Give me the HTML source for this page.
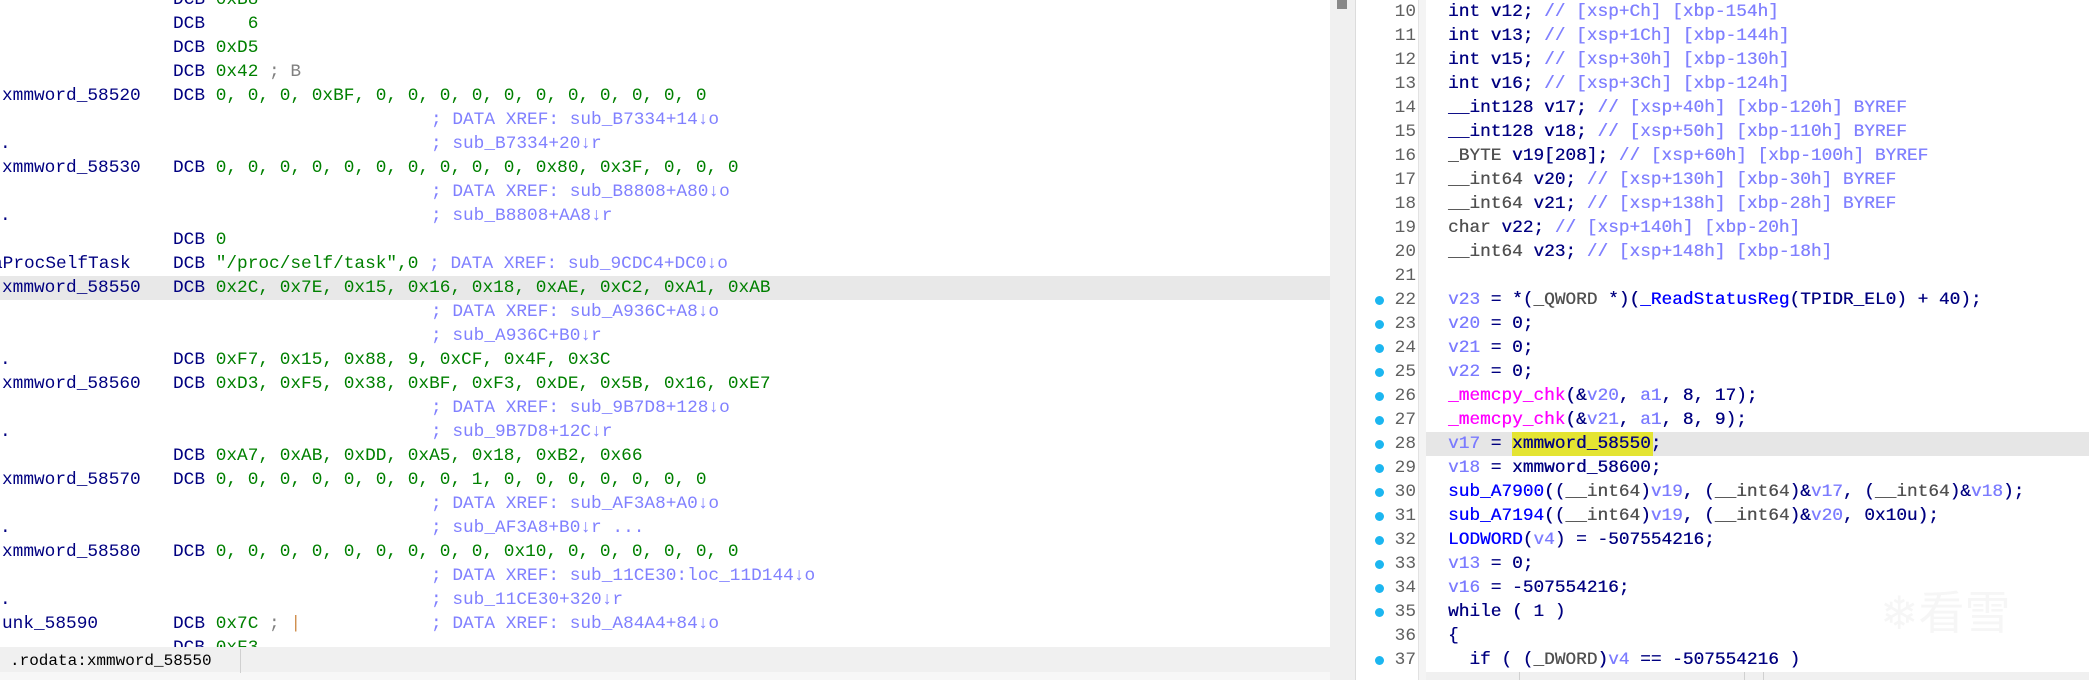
<!DOCTYPE html>
<html><head><meta charset="utf-8">
<style>
*{margin:0;padding:0;box-sizing:border-box}
body{width:2089px;height:680px;overflow:hidden;background:#fff;position:relative;font-family:"Liberation Mono","DejaVu Sans Mono",monospace;font-size:17.8px;}
.r{position:absolute;height:24px;line-height:24px;white-space:pre;}
.n{color:#000080}.g{color:#008000}.c{color:#8080ff}.gr{color:#808080}
.b{color:#0000ff}.m{color:#ff00ff}.v{color:#7b7bff}.d{color:#505050}.k{color:#000080}
.k{text-shadow:0.3px 0 0 currentColor}
.dot{position:absolute;left:1375px;width:9px;height:9px;border-radius:50%;background:#1cb6f0}
.ln{position:absolute;left:1380px;width:36px;text-align:right;color:#606060;height:24px;line-height:24px}
</style></head><body>
<div style="position:absolute;left:0;top:276px;width:1330px;height:24px;background:#e8e8e8"></div>
<div id="L">
<div class="r n" style="left:173px;top:-12px">DCB <span class="g">0xB8</span></div>
<div class="r n" style="left:173px;top:12px">DCB <span class="g">   6</span></div>
<div class="r n" style="left:173px;top:36px">DCB <span class="g">0xD5</span></div>
<div class="r n" style="left:173px;top:60px">DCB <span class="g">0x42</span> <span class="gr">; B</span></div>
<div class="r n" style="left:2px;top:84px">xmmword_58520</div>
<div class="r n" style="left:173px;top:84px">DCB <span class="g">0, 0, 0, 0xBF, 0, 0, 0, 0, 0, 0, 0, 0, 0, 0, 0</span></div>
<div class="r c" style="left:431px;top:108px">; DATA XREF: sub_B7334+14↓o</div>
<div class="r n" style="left:0;top:132px">.</div>
<div class="r c" style="left:431px;top:132px">; sub_B7334+20↓r</div>
<div class="r n" style="left:2px;top:156px">xmmword_58530</div>
<div class="r n" style="left:173px;top:156px">DCB <span class="g">0, 0, 0, 0, 0, 0, 0, 0, 0, 0, 0x80, 0x3F, 0, 0, 0</span></div>
<div class="r c" style="left:431px;top:180px">; DATA XREF: sub_B8808+A80↓o</div>
<div class="r n" style="left:0;top:204px">.</div>
<div class="r c" style="left:431px;top:204px">; sub_B8808+AA8↓r</div>
<div class="r n" style="left:173px;top:228px">DCB <span class="g">0</span></div>
<div class="r n" style="left:-8px;top:252px">aProcSelfTask</div>
<div class="r n" style="left:173px;top:252px">DCB <span class="g">"/proc/self/task",0</span> <span class="c">; DATA XREF: sub_9CDC4+DC0↓o</span></div>
<div class="r n" style="left:2px;top:276px">xmmword_58550</div>
<div class="r n" style="left:173px;top:276px">DCB <span class="g">0x2C, 0x7E, 0x15, 0x16, 0x18, 0xAE, 0xC2, 0xA1, 0xAB</span></div>
<div class="r c" style="left:431px;top:300px">; DATA XREF: sub_A936C+A8↓o</div>
<div class="r c" style="left:431px;top:324px">; sub_A936C+B0↓r</div>
<div class="r n" style="left:0;top:348px">.</div>
<div class="r n" style="left:173px;top:348px">DCB <span class="g">0xF7, 0x15, 0x88, 9, 0xCF, 0x4F, 0x3C</span></div>
<div class="r n" style="left:2px;top:372px">xmmword_58560</div>
<div class="r n" style="left:173px;top:372px">DCB <span class="g">0xD3, 0xF5, 0x38, 0xBF, 0xF3, 0xDE, 0x5B, 0x16, 0xE7</span></div>
<div class="r c" style="left:431px;top:396px">; DATA XREF: sub_9B7D8+128↓o</div>
<div class="r n" style="left:0;top:420px">.</div>
<div class="r c" style="left:431px;top:420px">; sub_9B7D8+12C↓r</div>
<div class="r n" style="left:173px;top:444px">DCB <span class="g">0xA7, 0xAB, 0xDD, 0xA5, 0x18, 0xB2, 0x66</span></div>
<div class="r n" style="left:2px;top:468px">xmmword_58570</div>
<div class="r n" style="left:173px;top:468px">DCB <span class="g">0, 0, 0, 0, 0, 0, 0, 0, 1, 0, 0, 0, 0, 0, 0, 0</span></div>
<div class="r c" style="left:431px;top:492px">; DATA XREF: sub_AF3A8+A0↓o</div>
<div class="r n" style="left:0;top:516px">.</div>
<div class="r c" style="left:431px;top:516px">; sub_AF3A8+B0↓r ...</div>
<div class="r n" style="left:2px;top:540px">xmmword_58580</div>
<div class="r n" style="left:173px;top:540px">DCB <span class="g">0, 0, 0, 0, 0, 0, 0, 0, 0, 0x10, 0, 0, 0, 0, 0, 0</span></div>
<div class="r c" style="left:431px;top:564px">; DATA XREF: sub_11CE30:loc_11D144↓o</div>
<div class="r n" style="left:0;top:588px">.</div>
<div class="r c" style="left:431px;top:588px">; sub_11CE30+320↓r</div>
<div class="r n" style="left:2px;top:612px">unk_58590</div>
<div class="r n" style="left:173px;top:612px">DCB <span class="g">0x7C</span> <span class="gr">; </span><span style="color:#d09050">|</span></div>
<div class="r c" style="left:431px;top:612px">; DATA XREF: sub_A84A4+84↓o</div>
<div class="r n" style="left:173px;top:636px">DCB <span class="g">0xF3</span></div>
</div>
<div style="position:absolute;left:0;top:647px;width:1330px;height:33px;background:#f0f0f0"></div>
<div style="position:absolute;left:0;top:672px;width:1330px;height:8px;background:#f7f7f7"></div>
<div class="r" style="left:10px;top:649px;color:#000;font-size:16px">.rodata:xmmword_58550</div>
<div style="position:absolute;left:240px;top:649px;width:1px;height:24px;background:#d0d0d0"></div>
<div style="position:absolute;left:1330px;top:0;width:25px;height:680px;background:#f0f0f0"></div>
<div style="position:absolute;left:1337px;top:0;width:10px;height:9px;background:#888"></div>
<div style="position:absolute;left:1355px;top:0;width:1px;height:680px;background:#dcdcdc"></div>
<div style="position:absolute;left:1418px;top:0;width:8px;height:680px;background:#f4f4f4;border-left:1px solid #e2e2e2"></div>
<div style="position:absolute;left:1426px;top:432px;width:663px;height:24px;background:#e6e6e6"></div>
<div style="position:absolute;left:1512px;top:432px;width:141px;height:24px;background:#e4e432"></div>
<div style="position:absolute;left:1426px;top:672px;width:663px;height:8px;background:#f0f0f0"></div>
<div style="position:absolute;left:1519px;top:672px;width:1px;height:8px;background:#d0d0d0"></div>
<div style="position:absolute;left:1744px;top:672px;width:1px;height:8px;background:#d0d0d0"></div>
<div style="position:absolute;left:1763px;top:672px;width:1px;height:8px;background:#d0d0d0"></div>
<div style="position:absolute;left:1880px;top:580px;font-family:'Noto Sans CJK SC',sans-serif;font-size:46px;color:#f6f6f6;line-height:60px">❄看雪</div>
<div class="ln" style="top:0">10</div><div class="ln" style="top:24px">11</div><div class="ln" style="top:48px">12</div><div class="ln" style="top:72px">13</div><div class="ln" style="top:96px">14</div><div class="ln" style="top:120px">15</div><div class="ln" style="top:144px">16</div><div class="ln" style="top:168px">17</div><div class="ln" style="top:192px">18</div><div class="ln" style="top:216px">19</div><div class="ln" style="top:240px">20</div><div class="ln" style="top:264px">21</div><div class="ln" style="top:288px">22</div><div class="ln" style="top:312px">23</div><div class="ln" style="top:336px">24</div><div class="ln" style="top:360px">25</div><div class="ln" style="top:384px">26</div><div class="ln" style="top:408px">27</div><div class="ln" style="top:432px">28</div><div class="ln" style="top:456px">29</div><div class="ln" style="top:480px">30</div><div class="ln" style="top:504px">31</div><div class="ln" style="top:528px">32</div><div class="ln" style="top:552px">33</div><div class="ln" style="top:576px">34</div><div class="ln" style="top:600px">35</div><div class="ln" style="top:624px">36</div><div class="ln" style="top:648px">37</div>
<div class="dot" style="top:296px"></div><div class="dot" style="top:320px"></div><div class="dot" style="top:344px"></div><div class="dot" style="top:368px"></div><div class="dot" style="top:392px"></div><div class="dot" style="top:416px"></div><div class="dot" style="top:440px"></div><div class="dot" style="top:464px"></div><div class="dot" style="top:488px"></div><div class="dot" style="top:512px"></div><div class="dot" style="top:536px"></div><div class="dot" style="top:560px"></div><div class="dot" style="top:584px"></div><div class="dot" style="top:608px"></div><div class="dot" style="top:656px"></div>
<div class="r k" style="left:1448px;top:0">int v12; <span class="c">// [xsp+Ch] [xbp-154h]</span></div>
<div class="r k" style="left:1448px;top:24px">int v13; <span class="c">// [xsp+1Ch] [xbp-144h]</span></div>
<div class="r k" style="left:1448px;top:48px">int v15; <span class="c">// [xsp+30h] [xbp-130h]</span></div>
<div class="r k" style="left:1448px;top:72px">int v16; <span class="c">// [xsp+3Ch] [xbp-124h]</span></div>
<div class="r k" style="left:1448px;top:96px">__int128 v17; <span class="c">// [xsp+40h] [xbp-120h] BYREF</span></div>
<div class="r k" style="left:1448px;top:120px">__int128 v18; <span class="c">// [xsp+50h] [xbp-110h] BYREF</span></div>
<div class="r k" style="left:1448px;top:144px"><span class="d">_BYTE</span> v19[208]; <span class="c">// [xsp+60h] [xbp-100h] BYREF</span></div>
<div class="r k" style="left:1448px;top:168px"><span class="d">__int64</span> v20; <span class="c">// [xsp+130h] [xbp-30h] BYREF</span></div>
<div class="r k" style="left:1448px;top:192px"><span class="d">__int64</span> v21; <span class="c">// [xsp+138h] [xbp-28h] BYREF</span></div>
<div class="r k" style="left:1448px;top:216px"><span class="d">char</span> v22; <span class="c">// [xsp+140h] [xbp-20h]</span></div>
<div class="r k" style="left:1448px;top:240px"><span class="d">__int64</span> v23; <span class="c">// [xsp+148h] [xbp-18h]</span></div>
<div class="r k" style="left:1448px;top:288px"><span class="v">v23</span> = *(<span class="d">_QWORD</span> *)(<span class="b">_ReadStatusReg</span>(TPIDR_EL0) + 40);</div>
<div class="r k" style="left:1448px;top:312px"><span class="v">v20</span> = 0;</div>
<div class="r k" style="left:1448px;top:336px"><span class="v">v21</span> = 0;</div>
<div class="r k" style="left:1448px;top:360px"><span class="v">v22</span> = 0;</div>
<div class="r k" style="left:1448px;top:384px"><span class="m">_memcpy_chk</span>(&amp;<span class="v">v20</span>, <span class="v">a1</span>, 8, 17);</div>
<div class="r k" style="left:1448px;top:408px"><span class="m">_memcpy_chk</span>(&amp;<span class="v">v21</span>, <span class="v">a1</span>, 8, 9);</div>
<div class="r k" style="left:1448px;top:432px"><span class="v">v17</span> = xmmword_58550;</div>
<div class="r k" style="left:1448px;top:456px"><span class="v">v18</span> = xmmword_58600;</div>
<div class="r k" style="left:1448px;top:480px"><span class="b">sub_A7900</span>((<span class="d">__int64</span>)<span class="v">v19</span>, (<span class="d">__int64</span>)&amp;<span class="v">v17</span>, (<span class="d">__int64</span>)&amp;<span class="v">v18</span>);</div>
<div class="r k" style="left:1448px;top:504px"><span class="b">sub_A7194</span>((<span class="d">__int64</span>)<span class="v">v19</span>, (<span class="d">__int64</span>)&amp;<span class="v">v20</span>, 0x10u);</div>
<div class="r k" style="left:1448px;top:528px"><span class="b">LODWORD</span>(<span class="v">v4</span>) = -507554216;</div>
<div class="r k" style="left:1448px;top:552px"><span class="v">v13</span> = 0;</div>
<div class="r k" style="left:1448px;top:576px"><span class="v">v16</span> = -507554216;</div>
<div class="r k" style="left:1448px;top:600px">while ( 1 )</div>
<div class="r k" style="left:1448px;top:624px">{</div>
<div class="r k" style="left:1448px;top:648px">  if ( (<span class="d">_DWORD</span>)<span class="v">v4</span> == -507554216 )</div>
</body></html>
